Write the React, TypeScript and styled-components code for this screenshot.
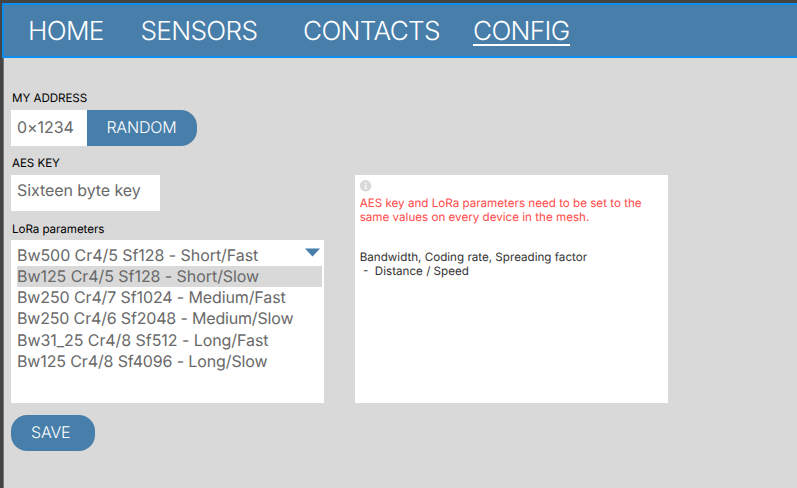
import React from "react";
import styled, { createGlobalStyle } from "styled-components";

const GlobalStyle = createGlobalStyle`
  * { box-sizing: border-box; }
  body {
    margin: 0;
    background: #d9d9d9;
    font-family: Inter, sans-serif;
    font-weight: 300;
    font-optical-sizing: none;
    text-rendering: geometricPrecision;
    overflow: hidden;
  }
`;

const Frame = styled.div`
  width: 797px;
  height: 488px;
  padding: 3px 0 0 2px;
  background: #444444;
  overflow: hidden;
`;

const Header = styled.nav`
  display: flex;
  align-items: flex-start;
  height: 55px;
  padding: 9px 0 0 24px;
  border: 2px solid #0d8ce9;
  border-right: 0;
  background: #477eaa;
`;

const NavItem = styled.a<{ $width: number; $active?: boolean }>`
  width: ${(p) => p.$width}px;
  height: 32px;
  font-size: 26.2px;
  line-height: 35px;
  letter-spacing: -0.68px;
  color: #fff;
  white-space: nowrap;
  border-bottom: ${(p) => (p.$active ? "2px solid #fff" : "0")};
`;

const Page = styled.main`
  display: flex;
  height: 430px;
  margin-left: 1px;
  padding: 33px 0 0 7px;
  border-left: 1px solid #777;
  background: #d9d9d9;
`;

const Form = styled.div`
  width: 344px;
`;

const Label = styled.label`
  display: block;
  height: 18.6px;
  padding-left: 1px;
  font-size: 11.64px;
  font-weight: 400;
  line-height: 15px;
  letter-spacing: -0.07px;
  color: #000;
`;

const Row = styled.div`
  display: flex;
  margin-bottom: 10.7px;
`;

const Field = styled.div<{ $width: number; $top?: number }>`
  width: ${(p) => p.$width}px;
  height: 36px;
  padding: ${(p) => p.$top ?? 5.3}px 0 0 6px;
  background: #fff;
  font-size: 16px;
  font-weight: 400;
  line-height: 21px;
  letter-spacing: -0.08px;
  color: #696969;
  white-space: nowrap;
`;

const Button = styled.button<{ $width: number; $attached?: boolean }>`
  width: ${(p) => p.$width}px;
  height: 36px;
  padding: 0 ${(p) => (p.$attached ? 1 : 4.5)}px 1px 0;
  border: 0;
  border-radius: ${(p) => (p.$attached ? "0 16px 16px 0" : "16px")};
  background: #477eaa;
  font-family: inherit;
  font-size: 16px;
  font-weight: 300;
  letter-spacing: -0.15px;
  text-rendering: inherit;
  color: #fff;
`;

const Select = styled.div`
  display: flex;
  width: 313px;
  height: 163.2px;
  margin-bottom: 11.2px;
  padding: 5px 2px 0 6px;
  background: #fff;
`;

const Options = styled.div`
  position: relative;
  width: 305px;
`;

const Option = styled.div<{ $selected?: boolean; $tracking: number }>`
  height: 21.1px;
  font-size: 16px;
  font-weight: 400;
  line-height: 21px;
  letter-spacing: ${(p) => p.$tracking}px;
  color: #696969;
  white-space: pre;
  background: ${(p) => (p.$selected ? "#d9d9d9" : "transparent")};
`;

const Arrow = styled.svg`
  position: absolute;
  top: 3px;
  right: 2.5px;
`;

const Info = styled.aside`
  width: 313px;
  height: 228px;
  margin-top: 84px;
  padding: 5px 4.7px;
  background: #fff;
`;

const InfoIcon = styled.svg`
  display: block;
  margin-bottom: 4px;
`;

const Text = styled.p<{ $warn?: boolean }>`
  margin: 0 0 ${(p) => (p.$warn ? 26.7 : 0)}px;
  font-size: 11.64px;
  font-weight: 400;
  line-height: ${(p) => (p.$warn ? 14.3 : 13.6)}px;
  white-space: pre;
  color: ${(p) => (p.$warn ? "#ff4a4a" : "#333")};
`;

const presets = [
  { name: "Bw500 Cr4/5 Sf128 - Short/Fast", tracking: -0.06 },
  { name: "Bw125 Cr4/5 Sf128 - Short/Slow", tracking: -0.06 },
  { name: "Bw250 Cr4/7 Sf1024 - Medium/Fast", tracking: -0.12 },
  { name: "Bw250 Cr4/6 Sf2048 - Medium/Slow", tracking: -0.17 },
  { name: "Bw31_25 Cr4/8 Sf512 - Long/Fast", tracking: -0.06 },
  { name: "Bw125 Cr4/8 Sf4096 - Long/Slow", tracking: -0.13 },
];

export default function App() {
  return (
    <Frame>
      <GlobalStyle />
      <Header>
        <NavItem $width={112.5}>HOME</NavItem>
        <NavItem $width={162.5}>SENSORS</NavItem>
        <NavItem $width={170}>CONTACTS</NavItem>
        <NavItem $width={97} $active>CONFIG</NavItem>
      </Header>
      <Page>
        <Form>
          <Label>MY ADDRESS</Label>
          <Row>
            <Field $width={76} $top={7}>0×1234</Field>
            <Button $width={110} $attached>RANDOM</Button>
          </Row>
          <Label>AES KEY</Label>
          <Row>
            <Field $width={149}>Sixteen byte key</Field>
          </Row>
          <Label>LoRa parameters</Label>
          <Select>
            <Options>
              {presets.map(({ name, tracking }, i) => (
                <Option key={name} $selected={i === 1} $tracking={tracking}>{name}</Option>
              ))}
              <Arrow width="15" height="9" viewBox="0 0 15 9">
                <path d="M0 0.5H15L7.5 8.5Z" fill="#477eaa" />
              </Arrow>
            </Options>
          </Select>
          <Button $width={84}>SAVE</Button>
        </Form>
        <Info>
          <InfoIcon width="12" height="12" viewBox="0 0 12 12">
            <circle cx="5.6" cy="5.8" r="5.8" fill="#d9d9d9" />
            <circle cx="5.8" cy="3.2" r="0.8" fill="#fff" />
            <path d="M4.8 5H6.4V8.4H7V9.1H4.6V8.4H5.3V5.7H4.8Z" fill="#fff" />
          </InfoIcon>
          <Text $warn>{"AES key and LoRa parameters need to be set to the\nsame values on every device in the mesh."}</Text>
          <Text>{"Bandwidth, Coding rate, Spreading factor\n -  Distance / Speed"}</Text>
        </Info>
      </Page>
    </Frame>
  );
}
